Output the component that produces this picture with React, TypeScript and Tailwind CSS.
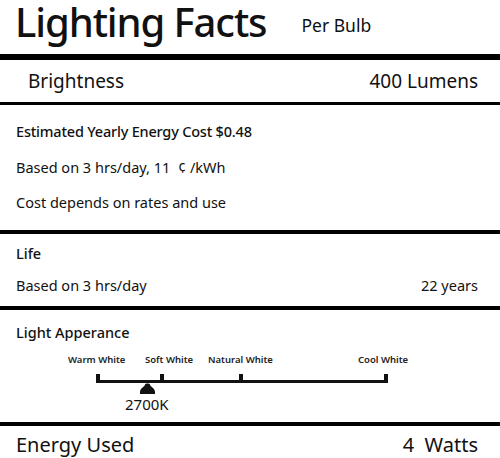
const font = { fontFamily: '"Noto Sans", "Open Sans", sans-serif' };

function Rule({ className }: { className: string }) {
  return <div className={`w-full bg-black ${className}`} />;
}

function Scale() {
  return (
    <div className="relative h-[70px] w-full">
      <span className="absolute left-[68px] top-[9px] text-[9.5px] font-semibold text-[#222]">Warm White</span>
      <span className="absolute left-[145px] top-[9px] text-[9.5px] font-semibold text-[#222]">Soft White</span>
      <span className="absolute left-[208px] top-[9px] text-[9.5px] font-semibold text-[#222]">Natural White</span>
      <span className="absolute left-[358px] top-[9px] text-[9.5px] font-semibold text-[#222]">Cool White</span>
      <div className="absolute left-[96px] top-[36px] h-[3px] w-[292px] bg-[#111]" />
      <div className="absolute left-[96px] top-[30px] h-[9px] w-[4px] bg-[#111]" />
      <div className="absolute left-[160px] top-[30px] h-[9px] w-[4px] bg-[#111]" />
      <div className="absolute left-[239px] top-[30px] h-[9px] w-[4px] bg-[#111]" />
      <div className="absolute left-[384px] top-[30px] h-[9px] w-[4px] bg-[#111]" />
      <svg className="absolute left-[140px] top-[39px]" width="15" height="11" viewBox="0 0 15 11">
        <path d="M5 1.5 C5 0 10 0 10 1.5 C10.5 4 15 5 15 9 V11 H0 V9 C0 5 4.5 4 5 1.5 Z" fill="#111" />
      </svg>
      <span className="absolute left-[125px] top-[49px] text-[15px] text-[#111]">2700K</span>
    </div>
  );
}

export default function App() {
  return (
    <div className="w-[500px] h-[458px] overflow-hidden bg-white text-[#111]" style={font}>
      {/* Header */}
      <div className="flex h-[54px] items-start pl-[15px] pt-[2px]">
        <h1 className="text-[40px] font-medium leading-[40px] tracking-[-1.1px]">Lighting Facts</h1>
        <span className="ml-[35px] mt-[10px] text-[17.5px]">Per Bulb</span>
      </div>
      <Rule className="h-[6px]" />

      {/* Brightness */}
      <div className="flex h-[42px] items-center justify-between pl-[28px] pr-[22px] text-[19px]">
        <span>Brightness</span>
        <span>400 Lumens</span>
      </div>
      <Rule className="h-[3px]" />

      {/* Cost */}
      <div className="flex h-[125px] flex-col justify-center gap-[14px] px-[16px] text-[14.5px]">
        <div className="font-medium tracking-[-0.2px]">Estimated Yearly Energy Cost $0.48</div>
        <div>Based on 3 hrs/day, 11 &nbsp;¢ /kWh</div>
        <div>Cost depends on rates and use</div>
      </div>
      <Rule className="h-[4px]" />

      {/* Life */}
      <div className="flex h-[72px] flex-col justify-center gap-[10px] pl-[16px] pr-[22px] text-[14.5px]">
        <div className="font-medium">Life</div>
        <div className="flex justify-between">
          <span>Based on 3 hrs/day</span>
          <span>22 years</span>
        </div>
      </div>
      <Rule className="h-[4px]" />

      {/* Light appearance */}
      <div className="h-[112px] pt-[12px]">
        <div className="pl-[16px] text-[14.5px] font-medium">Light Apperance</div>
        <Scale />
      </div>
      <Rule className="h-[4px]" />

      {/* Energy used */}
      <div className="flex h-[38px] items-center justify-between pl-[16px] pr-[22px] text-[20px]">
        <span>Energy Used</span>
        <span>4&nbsp; Watts</span>
      </div>
    </div>
  );
}
